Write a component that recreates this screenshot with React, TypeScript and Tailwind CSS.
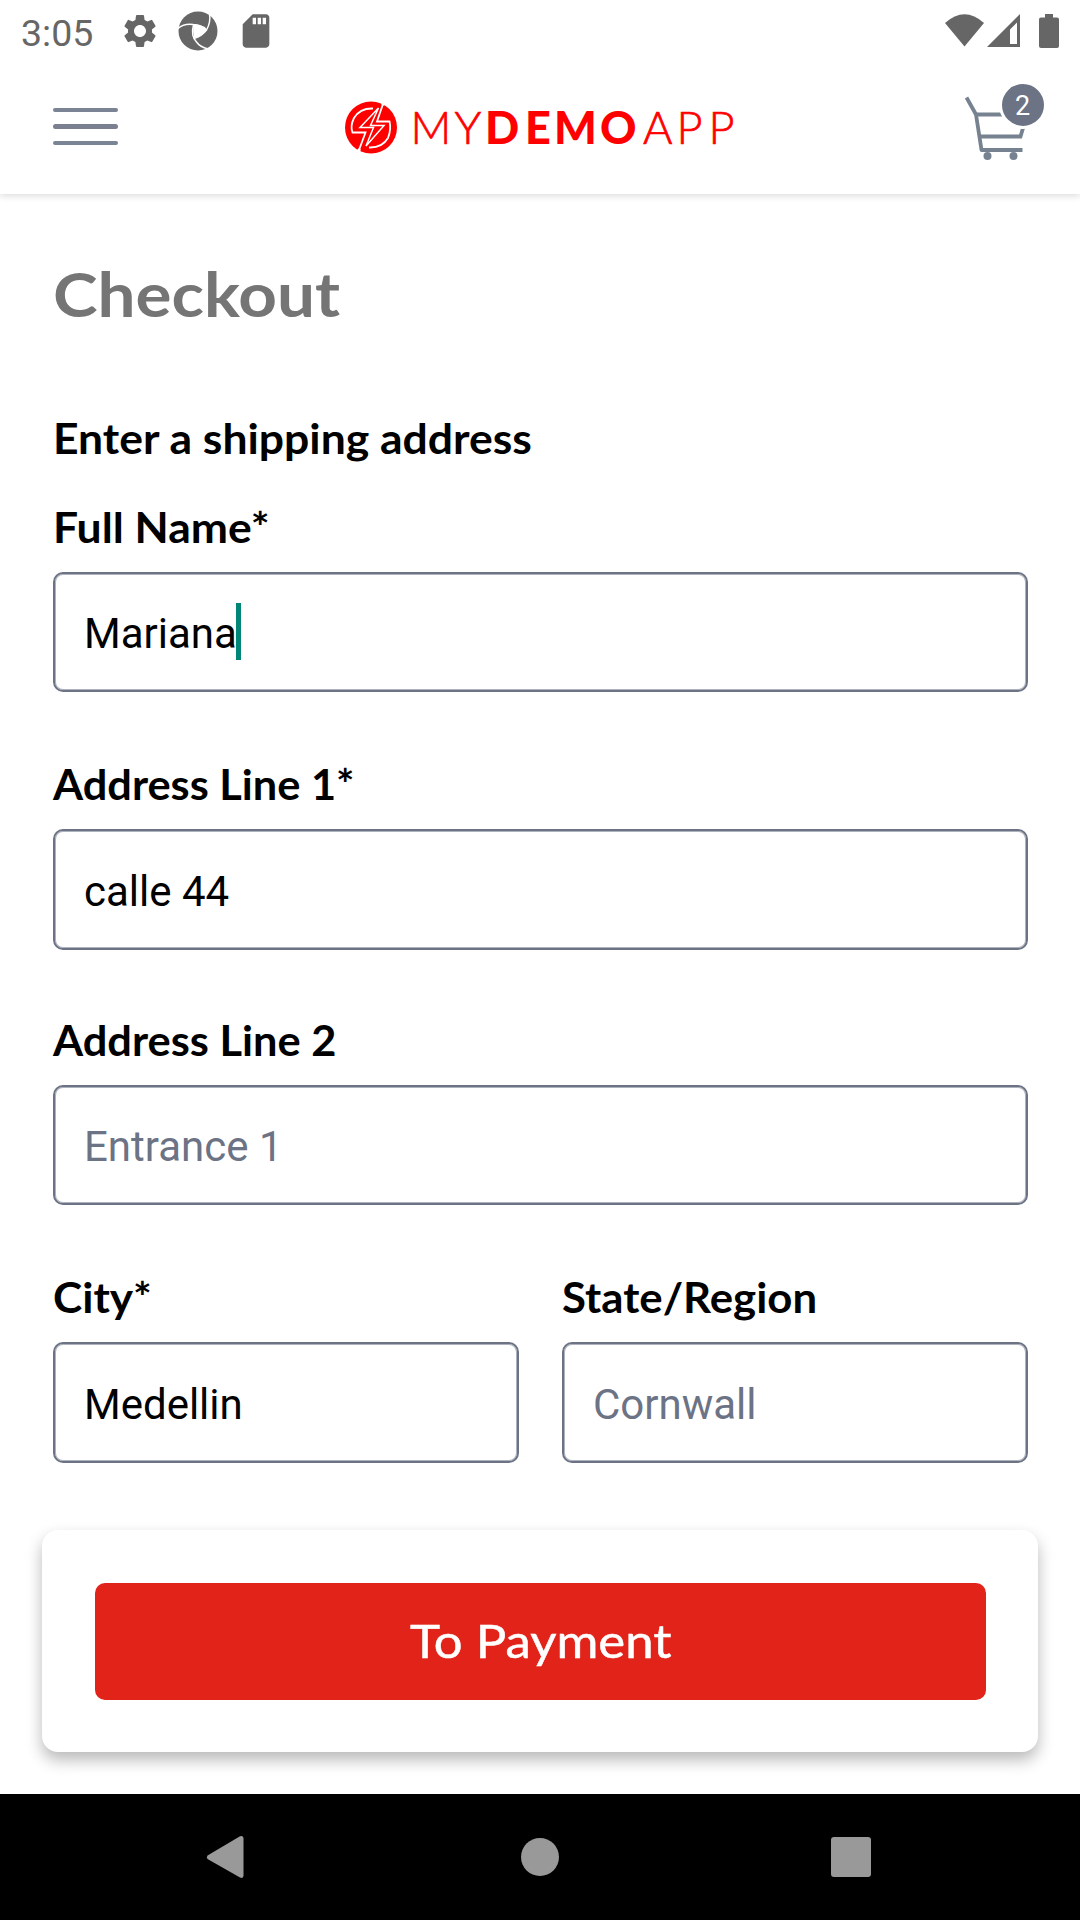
import { MdSettings, MdSdCard } from "react-icons/md";

const LABEL =
  "inline-block origin-left self-start font-['Lato',sans-serif] text-[41.5px] font-bold leading-[50px] whitespace-nowrap text-black";

function Aperture() {
  return (
    <svg width="40" height="40" viewBox="0 0 40 40" className="ml-[18px]">
      <circle cx="20" cy="20" r="19.5" fill="#666" />
      <path d="M15.500 14 Q22 13.500 27 16 L28.700 19 L24 24 L16 27 Q14.500 20 15.500 14 Z" fill="#fff" />
      <g fill="none" stroke="#fff" strokeWidth="1.500">
        <path d="M0 17.500 Q6 12 15.500 13.500 Q24 14 28.500 19" />
        <path d="M31.500 3 Q33 11 28.500 19 Q24 25 16 27.500" />
        <path d="M15.500 14 Q12.500 25 18.500 31 Q22 36 30 38" />
      </g>
    </svg>
  );
}

function StatusBar() {
  return (
    <div className="relative z-10 flex h-[62px] items-center bg-white pl-[21px] pr-[21px] text-[#666]">
      <span className="mt-[3px] w-[72px] whitespace-nowrap font-['Roboto',sans-serif] text-[37.5px] leading-[44px]">3:05</span>
      <MdSettings className="ml-[27px] size-[40px]" />
      <Aperture />
      <MdSdCard className="ml-[18px] size-[40px]" />
      <svg className="ml-auto" width="114" height="36" viewBox="945 13 114 36" fill="#666">
        <path d="M945 23 Q964.500 5.500 984 23 L964.500 46.500 Z" />
        <path fillRule="evenodd" d="M1020 14 V47 H987 Z M1017 22.500 L1010 29.500 V44 H1017 Z" />
        <path d="M1045 14 h8 v3.500 h4 q2 0 2 2 V46 q0 2 -2 2 H1041 q-2 0 -2 -2 V19.500 q0 -2 2 -2 h4 Z" />
      </svg>
    </div>
  );
}

function Logo() {
  return (
    <svg width="392" height="54" viewBox="345 101 392 54" className="ml-[227px]">
      <circle cx="371" cy="127.500" r="26" fill="#f00" />
      <g fill="none" stroke="#fff" strokeWidth="1.800">
        <path d="M373 108.500 Q360 108 354 118 Q350 126 352.500 132.500 H365.500 L359 150" />
        <path d="M369 147.500 Q382 148 388 138 Q391.500 129 389.500 121.500 H377 L383 104" />
        <path d="M378.500 108 L360 127.500 H373.500 L366 146 L384 125.500 H370.500 Z" strokeWidth="1.500" />
        <path d="M382.500 105 L384.500 100.500 M359.500 149 L357 155" strokeWidth="3.200" />
      </g>
      <g fill="#f00" fontFamily="Lato, sans-serif" fontSize="45" dominantBaseline="alphabetic">
        <text y="144" x="410.500 454.500" fontWeight="300" stroke="#f00" strokeWidth="0.700">MY</text>
        <text y="144" x="485 525 554 600" fontWeight="900">DEMO</text>
        <text y="144" x="643 676.500 708.500" fontWeight="300" stroke="#f00" strokeWidth="0.700">APP</text>
      </g>
    </svg>
  );
}

function Cart() {
  return (
    <div className="relative -mt-[10px] ml-auto h-[80px] w-[80px]">
      <svg width="80" height="80" viewBox="964 83 80 80" fill="none" stroke="#778290" strokeWidth="3.800">
        <path d="M966.500 97.500 L976 114.500 L981.500 150 H1022.500" strokeLinejoin="round" />
        <path d="M976 114.500 H1027 L1020.500 136.500 H980" />
        <circle cx="987.500" cy="156" r="4" fill="#778290" stroke="none" />
        <circle cx="1013.500" cy="156" r="4" fill="#778290" stroke="none" />
      </svg>
      <span className="absolute left-[34.500px] top-[-2px] flex size-[48px] items-center justify-center rounded-full border-[3px] border-white bg-[#6c7385] pt-[2px] font-['Roboto',sans-serif] text-[27px] leading-none text-white">
        2
      </span>
    </div>
  );
}

function Header() {
  return (
    <header className="relative flex h-[132px] items-center bg-white pl-[53px] pr-[36px] shadow-[0_2px_7px_rgba(0,0,0,0.14)]">
      <div className="-mt-[3px] flex w-[65px] flex-col gap-[12px]">
        <span className="h-[4.300px] rounded-full bg-[#7a8494]" />
        <span className="h-[4.300px] rounded-full bg-[#7a8090]" />
        <span className="h-[4.300px] rounded-full bg-[#7a8494]" />
      </div>
      <Logo />
      <Cart />
    </header>
  );
}

type FieldProps = {
  label: string;
  value: string;
  placeholder?: boolean;
  caret?: boolean;
  labelClass: string;
  boxClass: string;
};

function Field({ label, value, placeholder, caret, labelClass, boxClass }: FieldProps) {
  return (
    <div className="flex flex-1 flex-col gap-[20px]">
      <span className={`${LABEL} ${labelClass}`}>{label}</span>
      <div
        className={`flex items-center rounded-[10px] border-2 border-[#6c7385] pl-[29px] shadow-[inset_0_0_0_1px_rgba(108,115,133,0.55)] ${boxClass}`}
      >
        <span
          className={`whitespace-nowrap font-['Roboto',sans-serif] text-[42px] leading-[50px] ${placeholder ? "text-[#6c7385]" : "text-black"}`}
        >
          {value}
        </span>
        {caret && <span className="-ml-px -mt-[4px] h-[57px] w-[5px] bg-[#008577]" />}
      </div>
    </div>
  );
}

function NavBar() {
  return (
    <nav className="flex h-[126px] items-center justify-between bg-black pl-[206px] pr-[209px]">
      <svg width="38" height="44" viewBox="0 0 38 44" fill="#999">
        <path d="M1.500 20.500 L34 1.300 Q37.500 0 37.500 3.500 V40.500 Q37.500 44 34 42.500 L1.500 24 Q0 22.300 1.500 20.500 Z" />
      </svg>
      <span className="ml-[4px] size-[38px] rounded-full bg-[#999]" />
      <span className="size-[40px] rounded-[3px] bg-[#999]" />
    </nav>
  );
}

export default function App() {
  return (
    <div className="flex h-[1920px] w-[1080px] flex-col overflow-hidden bg-white">
      <StatusBar />
      <Header />
      <main className="flex h-[1600px] flex-col">
        <div className="flex flex-col pl-[53px] pr-[52px]">
          <h1 className="mt-[62px] font-['Lato',sans-serif] text-[62px] font-bold leading-[74px] text-[#757575]">
            <span className="inline-block origin-left scale-x-[1.087]">Checkout</span>
          </h1>
          <p className={`mt-[83px] scale-x-[1.072] ${LABEL}`}>Enter a shipping address</p>
          <div className="mt-[39px] flex">
            <Field label="Full Name*" value="Mariana" caret labelClass="scale-x-[1.071]" boxClass="h-[120px] pt-[3px]" />
          </div>
          <div className="mt-[67px] flex">
            <Field label="Address Line 1*" value="calle 44" labelClass="scale-x-[1.045]" boxClass="h-[121px] pt-[5px]" />
          </div>
          <div className="mt-[65px] flex">
            <Field label="Address Line 2" value="Entrance 1" placeholder labelClass="scale-x-[1.046]" boxClass="h-[120px] pt-[3px]" />
          </div>
          <div className="mt-[67px] flex gap-[43px]">
            <Field label="City*" value="Medellin" labelClass="scale-x-[1.063]" boxClass="h-[121px] pt-[5px]" />
            <Field label="State/Region" value="Cornwall" placeholder labelClass="scale-x-[1.054]" boxClass="h-[121px] pt-[5px]" />
          </div>
        </div>
        <div className="mx-[42px] mt-[67px] h-[222px] rounded-[16px] bg-white pl-[53px] pr-[52px] pt-[53px] shadow-[0_8px_16px_rgba(0,0,0,0.28)]">
          <button className="flex h-[117px] w-full items-center justify-center rounded-[10px] bg-[#e2231a] pb-[3px] font-['Lato',sans-serif] text-[47px] leading-[56px] text-white">
            <span className="scale-x-[1.083] [-webkit-text-stroke:0.5px_white]">To Payment</span>
          </button>
        </div>
      </main>
      <NavBar />
    </div>
  );
}
